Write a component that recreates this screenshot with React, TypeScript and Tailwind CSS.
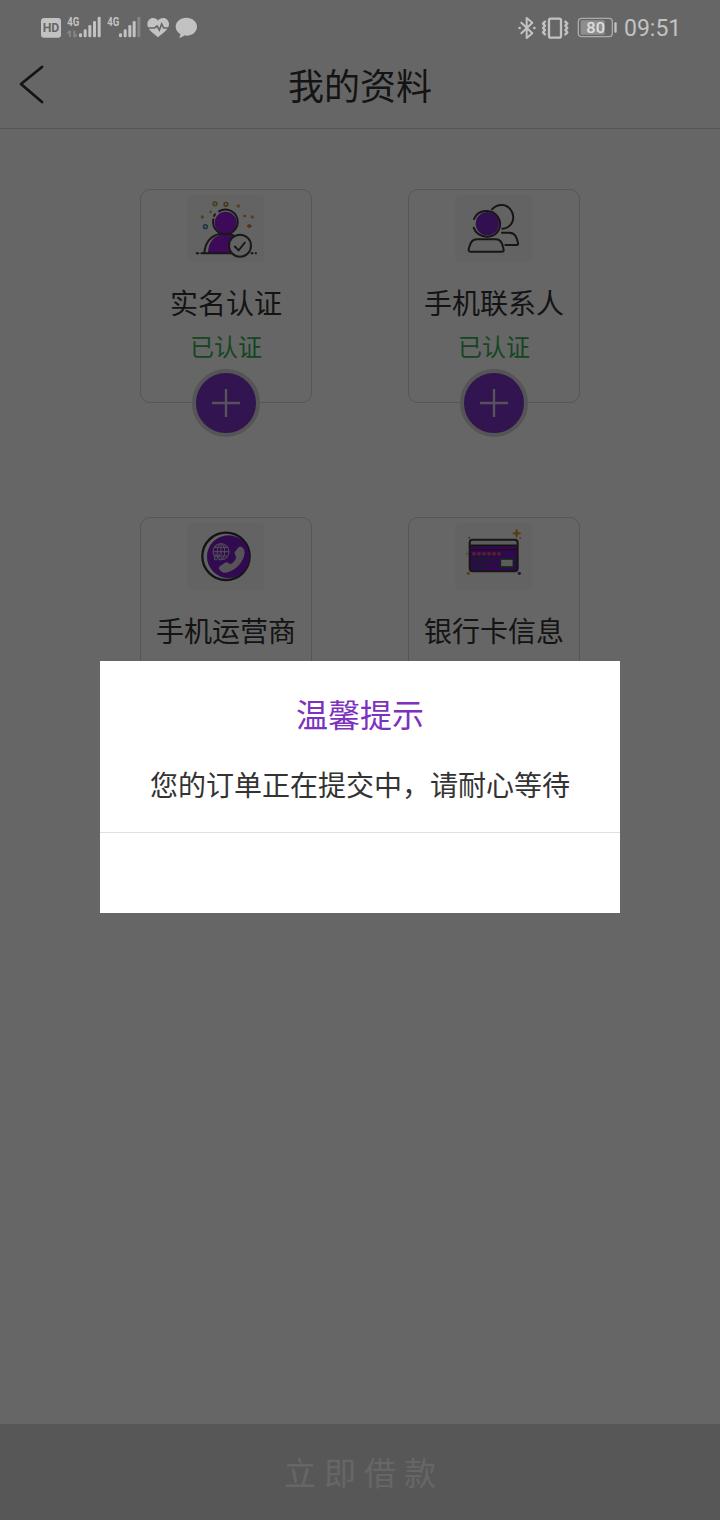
import { ReactNode } from 'react';

interface CardProps {
    title: string;
    status?: string;
    icon: ReactNode;
}

const SignalIcons = () => (
    <svg className="h-[45px] w-[180px]" viewBox="0 0 540 135" fill="#c2c2c2" fontFamily="Roboto, sans-serif">
        <rect x="33" y="39" width="60" height="59" rx="9" />
        <text x="38" y="82" fontSize="37" fontWeight="700" fill="#666666" textLength="50" lengthAdjust="spacingAndGlyphs">HD</text>
        <text x="112" y="63" fontSize="39" fontWeight="700" textLength="36" lengthAdjust="spacingAndGlyphs">4G</text>
        <path d="M120 77v19M113 85l7-8M133 77v19M133 96l8-8" stroke="#858585" strokeWidth="6" fill="none" />
        <rect x="147" y="85" width="9" height="12" rx="4" />
        <rect x="161" y="73" width="9" height="24" rx="4" />
        <rect x="175" y="60" width="9" height="37" rx="4" />
        <rect x="189" y="48" width="9" height="49" rx="4" />
        <rect x="203" y="35" width="9" height="62" rx="4" />
        <text x="232" y="63" fontSize="39" fontWeight="700" textLength="36" lengthAdjust="spacingAndGlyphs">4G</text>
        <rect x="267" y="85" width="9" height="12" rx="4" />
        <rect x="281" y="73" width="9" height="24" rx="4" />
        <rect x="295" y="60" width="9" height="37" rx="4" />
        <rect x="308" y="48" width="9" height="49" rx="4" />
        <rect x="322" y="35" width="9" height="62" rx="4" fill="#858585" />
        <path d="M384 97C374 87 352 76 352 57c0-10 8-18 17-18 7 0 12 3 15 8 3-5 9-8 16-8 9 0 17 8 17 18 0 19-23 30-33 40z" />
        <path d="M353 69h21l7-6 7 12 7-18 6 12h16" stroke="#666666" strokeWidth="5" fill="none" />
        <path d="M469 38c18 0 32 12 32 27s-14 27-32 27c-2 0-4 0-6-1-4 4-9 7-16 8 3-4 4-8 4-12-8-5-14-13-14-22 0-15 14-27 32-27z" />
    </svg>
)

const DeviceIcons = () => (
    <svg className="h-[45px] w-[112px]" viewBox="0 0 336 135" fill="none" stroke="#c2c2c2" fontFamily="Roboto, sans-serif">
        <path d="M34 53l33 32-17 14V39l17 14-33 32" strokeWidth="6" strokeLinejoin="round" strokeLinecap="round" />
        <circle cx="29" cy="69" r="4" fill="#c2c2c2" stroke="none" />
        <circle cx="73" cy="69" r="4" fill="#c2c2c2" stroke="none" />
        <rect x="117" y="41" width="36" height="57" rx="5" strokeWidth="7" />
        <path d="M105 50l-6 6 6 6-6 7 6 6-6 7 6 6M166 50l6 6-6 6 6 7-6 6 6 7-6 6" strokeWidth="7" strokeLinecap="round" strokeLinejoin="round" />
        <rect x="205" y="40" width="102" height="55" rx="10" strokeWidth="4" stroke="#aaaaaa" />
        <rect x="212" y="46" width="72" height="43" rx="3" fill="#8e8e8e" stroke="none" />
        <rect x="313" y="52" width="7" height="31" rx="3" fill="#c2c2c2" stroke="none" />
        <text x="229" y="83" fontSize="46" fontWeight="500" fill="#dedede" stroke="none" textLength="56" lengthAdjust="spacingAndGlyphs">80</text>
    </svg>
)

const IdentityIcon = () => (
    <svg className="h-[67px] w-[77px]" viewBox="21 15 231 201" fill="none">
        <g strokeWidth="5">
            <circle cx="105" cy="41" r="5.5" stroke="#b4a546" />
            <circle cx="138" cy="43" r="5.5" stroke="#b98c3c" />
            <circle cx="76" cy="110" r="5.5" stroke="#468cb4" />
        </g>
        <path d="M175 43v10M170 48h10M67 76v10M62 81h10M217 76v10M212 81h10" stroke="#c8a53c" strokeWidth="5" />
        <path d="M208 102v13M201 108h14" stroke="#d2872d" strokeWidth="6" />
        <circle cx="194" cy="78" r="4" fill="#b97837" />
        <circle cx="92" cy="66" r="3.5" fill="#b99637" />
        <path d="M84 190c0-34 20-57 51-57 17 0 29 5 37 13l8 44z" fill="#9619dc" />
        <circle cx="137" cy="98" r="33" fill="#9619dc" />
        <g stroke="#3c3c3c" strokeWidth="6" strokeLinecap="round">
            <path d="M117 64a37 37 0 1 1-17 24M102 78l3-5" />
            <path d="M73 189c2-32 21-54 48-57h28c7 1 12 4 16 8M64 190h122M50 190h5M214 190h4M227 190h1" />
        </g>
        <circle cx="180" cy="167" r="33" fill="#f5f5f5" stroke="#3c3c3c" strokeWidth="6" />
        <path d="M163 168l13 13 20-25" stroke="#3c3c3c" strokeWidth="6" />
    </svg>
)

const ContactsIcon = () => (
    <svg className="h-[67px] w-[77px]" viewBox="15 15 231 201" fill="none" stroke="#373737" strokeWidth="6" strokeLinecap="round" strokeLinejoin="round">
        <path d="M126 58c18-20 49-17 60 8 11 24-4 49-29 50" />
        <path d="M156 128h22c19 0 22 16 26 31 1 4-1 6-5 6h-33" />
        <circle cx="112" cy="101" r="35" fill="#7d28c8" stroke="none" />
        <path d="M72 87c12-30 54-32 71-7 19 29-1 60-32 60-19 0-35-11-40-27" />
        <path d="M82 148h55c19 0 20 17 24 31 1 4-1 6-5 6H61c-4 0-6-3-5-7 4-15 7-30 26-30z" />
    </svg>
)

const OperatorIcon = () => (
    <svg className="h-[67px] w-[77px]" viewBox="21 24 231 201" fill="none">
        <circle cx="138" cy="124" r="71" stroke="#323232" strokeWidth="7" />
        <circle cx="145" cy="125" r="64" fill="#7d19c8" />
        <path d="M176 98c6-3 10-2 13 3 5 7 4 16 0 27-8 19-21 33-42 41-11 5-21 3-27-5-3-4-3-8 2-11l13-8c5-3 8-1 12 2 3 2 5 1 9-1 7-5 11-10 13-17 1-4 0-6-2-9-3-5-3-8 2-13z" fill="#d7d2dc" stroke="#d7d2dc" strokeWidth="3" />
        <g stroke="#c3b4d2" strokeWidth="3.5">
            <circle cx="123" cy="110" r="24" />
            <ellipse cx="123" cy="110" rx="11" ry="24" />
            <path d="M123 86v48M99 110h48M104 97h38M104 123h38" />
        </g>
        <path d="M101 117h20v19h-20z" fill="#7d19c8" />
        <path d="M104 134v-14h14v5h-8l10 10M104 134h8" stroke="#c3b4d2" strokeWidth="4" />
    </svg>
)

const BankCardIcon = () => (
    <svg className="h-[67px] w-[77px]" viewBox="15 24 231 201" fill="none">
        <rect x="59" y="74" width="144" height="95" rx="9" fill="#7814be" />
        <path d="M60 90v-7c0-6 3-9 9-9h125c6 0 9 3 9 9v7z" fill="#e6e6e6" />
        <path d="M60 91h142" stroke="#323232" strokeWidth="5" />
        <path d="M60 104h142" stroke="#50146e" strokeWidth="4" />
        <rect x="59" y="74" width="144" height="95" rx="9" stroke="#373737" strokeWidth="6" />
        <path d="M67 116h86" stroke="#c8645a" strokeWidth="9" strokeDasharray="10 5" />
        <path d="M67 132h62M67 143h62M67 156h41" stroke="#3c4673" strokeWidth="6" />
        <rect x="151" y="132" width="39" height="24" fill="#e6e6dc" stroke="#286450" strokeWidth="5" />
        <path d="M200 42l3 10 9 3-9 3-3 10-3-10-9-3 9-3z" fill="#d79b37" stroke="#d79b37" strokeWidth="3" />
        <circle cx="211" cy="69" r="3" fill="#d8a050" />
        <circle cx="55" cy="175" r="5" fill="#d2a83c" />
        <circle cx="208" cy="175" r="5" fill="#503ca0" />
        <circle cx="58" cy="68" r="3" fill="#7878d2" />
        <circle cx="51" cy="116" r="2.5" fill="#c89632" />
    </svg>
)

const InfoCard = ({ title, status, icon }: CardProps) => (
    <div className="relative flex h-[214px] w-[172px] flex-col items-center rounded-[10px] border border-[#d4d4d4] pt-[5px]">
        <div className="mr-px shrink-0 overflow-hidden rounded-[5px] bg-[#f7f7f7]">{icon}</div>
        <h2 className="mt-[20px] text-[28px] leading-10 whitespace-nowrap text-[#333333]">{title}</h2>
        {status && <p className="mt-[8px] text-[24px] leading-8 text-[#36b054]">{status}</p>}
        <div className="absolute -bottom-[35px] flex size-[68px] items-center justify-center rounded-full border-4 border-[#d4d4d4] bg-[#7d32c8]">
            <svg className="size-7" viewBox="0 0 28 28" stroke="#d9cfe3" strokeWidth="2.4">
                <path d="M14 0v28M0 14h28" />
            </svg>
        </div>
    </div>
)

const cards: CardProps[] = [
    { title: '实名认证', status: '已认证', icon: <IdentityIcon /> },
    { title: '手机联系人', status: '已认证', icon: <ContactsIcon /> },
    { title: '手机运营商', icon: <OperatorIcon /> },
    { title: '银行卡信息', icon: <BankCardIcon /> },
]

export default function App() {
    return (
        <div className="relative flex h-[1520px] w-[720px] flex-col overflow-hidden bg-white font-['Noto_Sans_CJK_SC',sans-serif]">
            <div className="z-20 flex h-[50px] shrink-0 items-center justify-between pt-[5px] pl-[30px]">
                <SignalIcons />
                <div className="flex w-[210px] items-center gap-[2px]">
                    <DeviceIcons />
                    <span className="pt-[2px] font-[Roboto] text-[23px] leading-[43px] text-[#c2c2c2]">09:51</span>
                </div>
            </div>

            <header className="grid h-[79px] shrink-0 grid-cols-[80px_1fr_80px] items-center border-b border-[#d4d4d4] pb-[8px]">
                <svg className="ml-[18px] h-10 w-7" viewBox="0 0 28 40" fill="none" stroke="#333333" strokeWidth="2.8" strokeLinecap="round" strokeLinejoin="round">
                    <path d="M24 2L3 19l21 18" />
                </svg>
                <h1 className="pb-[2px] text-center text-[36px] leading-[48px] text-[#333333]">我的资料</h1>
            </header>

            <main className="grid grow grid-cols-[172px_172px] content-start justify-center gap-x-[96px] gap-y-[114px] pt-[60px]">
                {cards.map(card => <InfoCard key={card.title} {...card} />)}
            </main>

            <button className="h-24 shrink-0 bg-[#d9d9d9] pb-[2px] pl-2 text-[32px] tracking-[8px] text-white">立即借款</button>

            {/* modal */}
            <div className="absolute inset-0 z-10 flex flex-col items-center bg-black/60 pt-[661px]">
                <div className="flex h-[252px] w-[520px] flex-col bg-white text-center">
                    <h3 className="mt-[29px] text-[32px] leading-[46px] text-[#7d32be]">温馨提示</h3>
                    <p className="mt-[28px] text-[28px] leading-10 text-[#333333]">您的订单正在提交中，请耐心等待</p>
                    <div className="mt-[28px] border-t border-[#e0e0e0]" />
                </div>
            </div>
        </div>
    )
}
